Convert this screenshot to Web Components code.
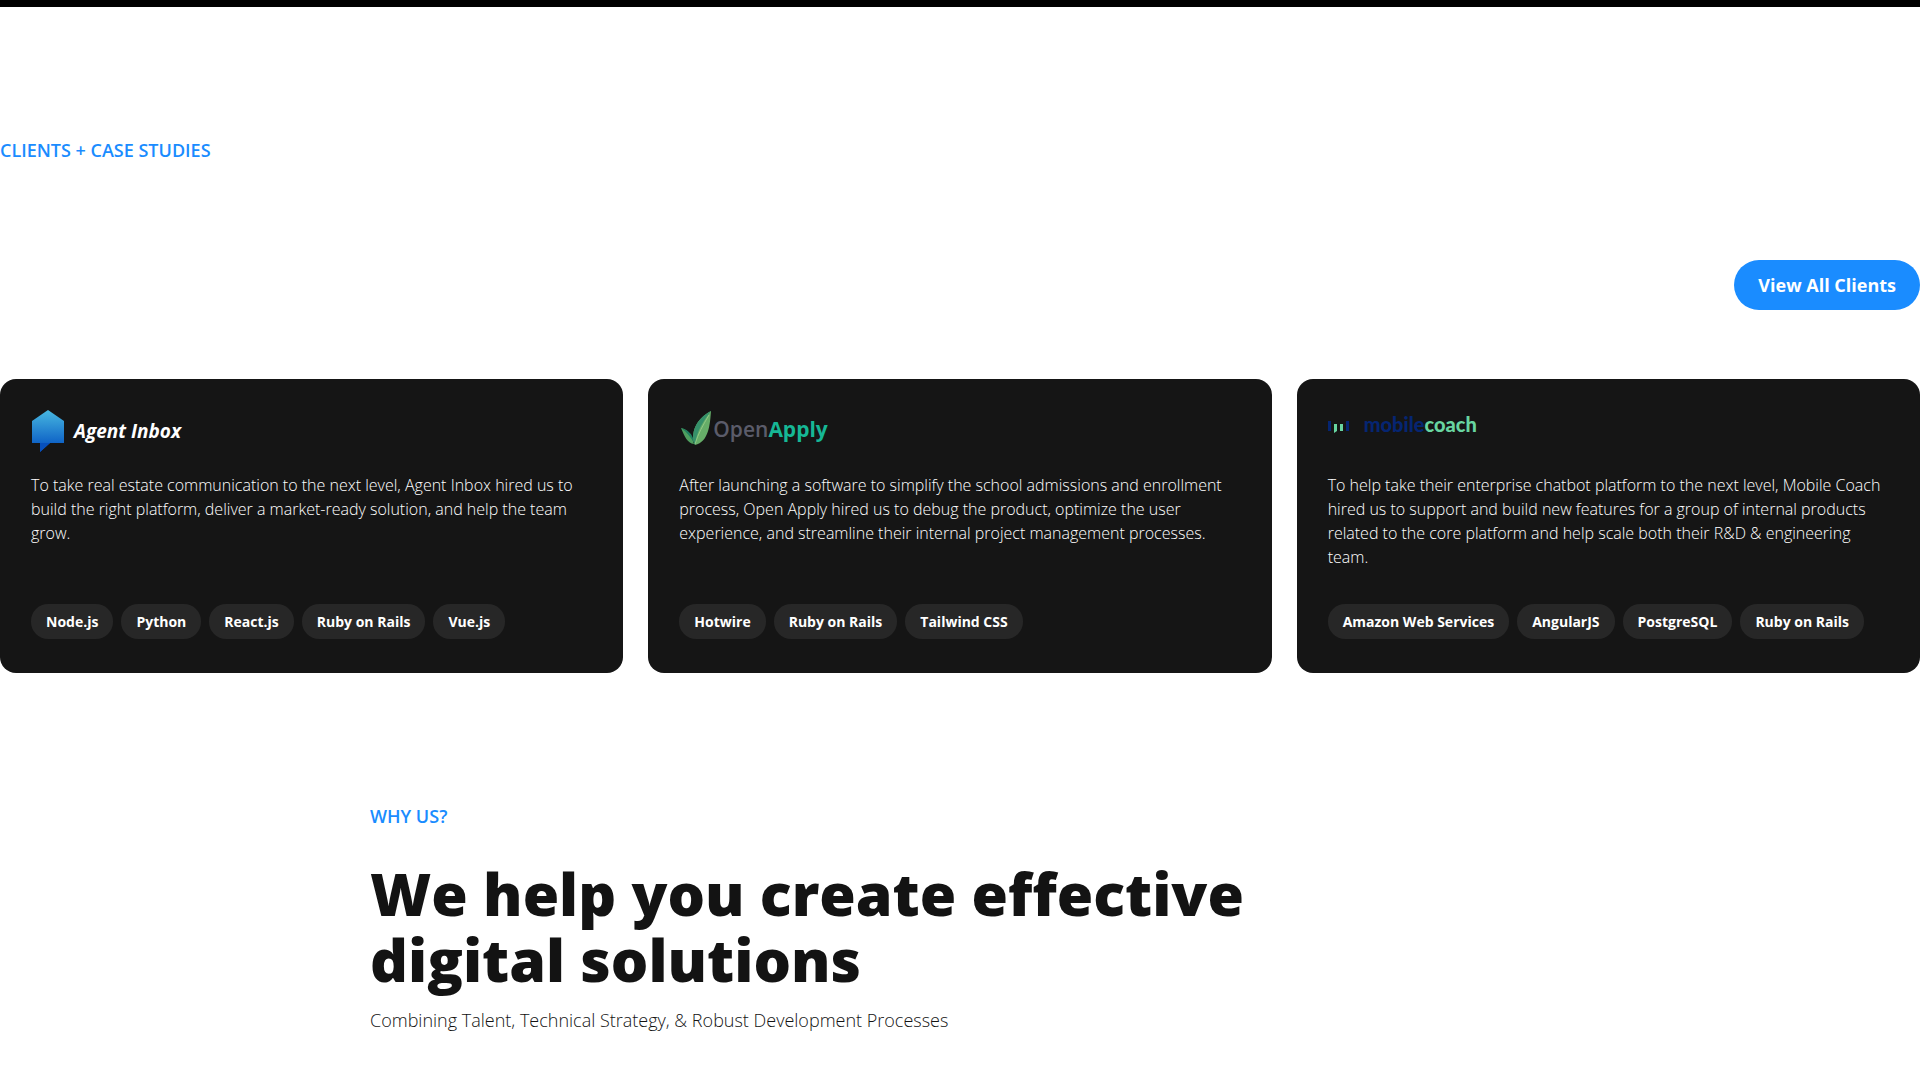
<!DOCTYPE html>
<html lang="en">
<head>
<meta charset="utf-8">
<title>Clients and case studies</title>
<style>
  body { margin: 0; background: #fff; color: #131313; font-family: "Open Sans", "Noto Sans", sans-serif; font-size: 16px; line-height: 24px; }
</style>
</head>
<body>
<clients-section>
  <section-label slot="label">CLIENTS + CASE STUDIES</section-label>
  <pill-link slot="action" href="#clients">View All Clients</pill-link>
  <case-card tags="Node.js,Python,React.js,Ruby on Rails,Vue.js">
    <agent-inbox-logo slot="logo"></agent-inbox-logo>
    To take real estate communication to the next level, Agent Inbox hired us to build the right platform, deliver a market-ready solution, and help the team grow.
  </case-card>
  <case-card tags="Hotwire,Ruby on Rails,Tailwind CSS">
    <open-apply-logo slot="logo"></open-apply-logo>
    After launching a software to simplify the school admissions and enrollment process, Open Apply hired us to debug the product, optimize the user experience, and streamline their internal project management processes.
  </case-card>
  <case-card tags="Amazon Web Services,AngularJS,PostgreSQL,Ruby on Rails">
    <mobile-coach-logo slot="logo"></mobile-coach-logo>
    To help take their enterprise chatbot platform to the next level, Mobile Coach hired us to support and build new features for a group of internal products related to the core platform and help scale both their R&amp;D &amp; engineering team.
  </case-card>
</clients-section>
<why-section>
  <section-label slot="label">WHY US?</section-label>
  <span slot="title">We help you create effective digital solutions</span>
  <span slot="subtitle">Combining Talent, Technical Strategy, &amp; Robust Development Processes</span>
</why-section>

<script>
const define = (name, html, setup) => {
  const template = document.createElement('template');
  template.innerHTML = html;
  customElements.define(name, class extends HTMLElement {
    constructor() {
      super();
      this.attachShadow({ mode: 'open' }).append(template.content.cloneNode(true));
    }
    connectedCallback() { if (setup) setup(this, this.shadowRoot); }
  });
};

define('section-label', `
  <style>:host { display: block; font-size: 18px; line-height: 28px; font-weight: 600; color: #1a8cff; }</style>
  <slot></slot>`);

define('pill-link', `
  <style>
    :host { display: block; }
    a { display: block; padding: 11px 24px; border-radius: 25px; background: #1a8cff; color: #fff;
        font-size: 18px; line-height: 28px; font-weight: 700; text-decoration: none; }
  </style>
  <a><slot></slot></a>`, (el, root) => { root.querySelector('a').href = el.getAttribute('href'); });

define('tech-tag', `
  <style>:host { display: block; padding: 7px 15px; border-radius: 17px; background: #272727; color: #fff;
    font-size: 14px; line-height: 21px; font-weight: 700; white-space: nowrap; }</style>
  <slot></slot>`);

define('case-card', `
  <style>
    :host { display: flex; flex-direction: column; box-sizing: border-box; padding: 31px 31px 34px; border-radius: 16px; background: #151515; color: #fff; }
    .logo { height: 42px; margin-bottom: 21px; }
    p { flex: 1; margin: 0 0 35px; font-weight: 300; }
    .tags { display: flex; flex-wrap: wrap; gap: 8px; }
  </style>
  <div class="logo"><slot name="logo"></slot></div>
  <p><slot></slot></p>
  <div class="tags"></div>`, (el, root) => {
    root.querySelector('.tags').replaceChildren(...el.getAttribute('tags').split(',').map(text => {
      const tag = document.createElement('tech-tag');
      tag.textContent = text;
      return tag;
    }));
  });

define('agent-inbox-logo', `
  <style>
    :host { display: flex; align-items: center; gap: 10px; height: 42px; font-size: 19px; font-weight: 700; font-style: italic; }
    svg { display: block; margin-left: 1px; }
  </style>
  <svg width="32" height="42" viewBox="0 0 32 42" aria-hidden="true">
    <defs><linearGradient id="g" x1="0" y1="0" x2="0" y2="1"><stop offset="0" stop-color="#48b8e0"/><stop offset=".75" stop-color="#1268c8"/><stop offset="1" stop-color="#0546b8"/></linearGradient></defs>
    <path d="M0 11 16 0l16 11v22H18l-10 9v-9H0z" fill="url(#g)"/>
    <path d="M8 33h10l-10 9z" fill="#0750bc"/>
  </svg>
  <span>Agent Inbox</span>`);

define('open-apply-logo', `
  <style>
    :host { display: flex; align-items: center; gap: 2px; height: 38px; font-size: 21px; font-weight: 600; color: #5b5c6a; }
    svg { display: block; align-self: flex-start; }
    b { font-weight: 700; color: #16b795; }
  </style>
  <svg width="32" height="36" viewBox="-2 0 32 36" aria-hidden="true">
    <path d="M0 18c7 2 10 5 13 16C6 33 4 27 0 18z" fill="#4f9f5f"/>
    <path d="M0 18c7 2 10 5 12 10l2 6C10 28 6 22 0 18z" fill="#1f7f60"/>
    <path d="M30 1c-1 13-2 31-16 34C9 23 15 9 30 1z" fill="#66ad68"/>
    <path d="M30 1C22 12 16 20 14 35 9 23 15 9 30 1z" fill="#35906a"/>
    <path d="M28 5C22 15 17 24 14 34" fill="none" stroke="#9bcf8e" stroke-width=".8"/>
  </svg>
  <span>Open<b>Apply</b></span>`);

define('mobile-coach-logo', `
  <style>
    :host { display: flex; align-items: center; gap: 14px; height: 28px; font-family: Lato, sans-serif; font-size: 20px; line-height: 22px; font-weight: 900; color: #052572; }
    svg { display: block; }
    b { font-weight: 900; color: #68d5a1; }
  </style>
  <svg width="22" height="20" viewBox="0 0 22 20" aria-hidden="true">
    <path d="M0 7h3v10H0zM18 7h3v10h-3z" fill="#052572"/>
    <path d="M6 10h3v7l-3 2zM12 10h3v7h-3z" fill="#68d5a1"/>
  </svg>
  <span>mobile<b>coach</b></span>`);

define('clients-section', `
  <style>
    :host { display: block; border-top: 7px solid #000; padding-top: 129px; }
    .head { display: flex; flex-direction: column; gap: 96px; margin-bottom: 69px; }
    .action { display: flex; justify-content: flex-end; }
    .cards { display: grid; grid-template-columns: repeat(3, 1fr); gap: 25px; }
  </style>
  <section>
    <div class="head"><slot name="label"></slot><div class="action"><slot name="action"></slot></div></div>
    <div class="cards"><slot></slot></div>
  </section>`);

define('why-section', `
  <style>
    :host { display: block; max-width: 1180px; margin: 0 auto; padding: 129px 0 40px; }
    h2 { max-width: 920px; margin: 30px 0 14px; font-size: 59px; line-height: 66px; font-weight: 800; }
    p { margin: 0; font-size: 18px; line-height: 28px; font-weight: 300; }
  </style>
  <section>
    <slot name="label"></slot>
    <h2><slot name="title"></slot></h2>
    <p><slot name="subtitle"></slot></p>
  </section>`);
</script>
</body>
</html>
